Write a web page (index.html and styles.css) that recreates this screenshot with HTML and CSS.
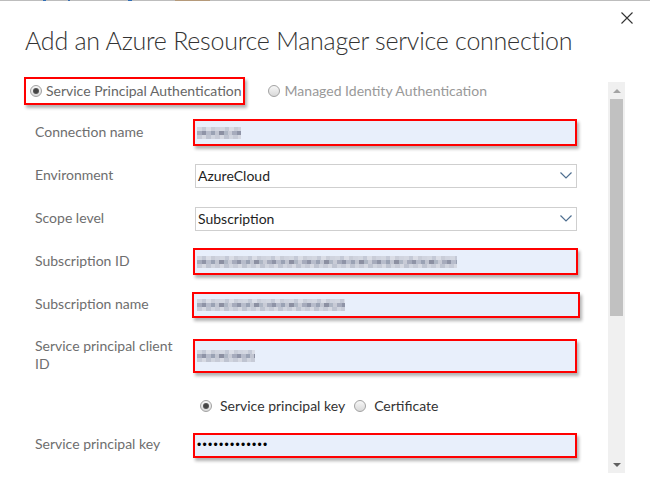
FILE: index.html
```html
<!DOCTYPE html>
<html lang="en">
<head>
<meta charset="utf-8">
<title>Add an Azure Resource Manager service connection</title>
<link rel="stylesheet" href="styles.css">
</head>
<body>
<div class="topline"></div>
<div class="dialog">
  <button class="close" aria-label="Close">
    <svg width="12" height="12" viewBox="0 0 12 12"><path d="M0.5 0.5 L11.5 11.5 M11.5 0.5 L0.5 11.5" stroke="#333" stroke-width="1.1" fill="none"/></svg>
  </button>
  <h1 class="title">Add an Azure Resource Manager service connection</h1>
  <div class="body">
    <div class="form">
      <div class="auth">
        <label class="radio auth-sel"><span class="dot checked"></span>Service Principal Authentication</label>
        <label class="radio auth-alt"><span class="dot"></span>Managed Identity Authentication</label>
      </div>
      <div class="grid">
        <span class="lbl">Connection name</span>
        <div class="field h27"><span class="blur" style="width:44px"></span></div>

        <span class="lbl">Environment</span>
        <div class="select"><span class="val">AzureCloud</span><svg class="chev" width="12" height="7" viewBox="0 0 12 7"><path d="M0.5 0.5 L6 6 L11.5 0.5" stroke="#4f6f90" stroke-width="1.2" fill="none"/></svg></div>

        <span class="lbl">Scope level</span>
        <div class="select"><span class="val">Subscription</span><svg class="chev" width="12" height="7" viewBox="0 0 12 7"><path d="M0.5 0.5 L6 6 L11.5 0.5" stroke="#4f6f90" stroke-width="1.2" fill="none"/></svg></div>

        <span class="lbl">Subscription ID</span>
        <div class="field h27 wide1"><span class="blur" style="width:260px"></span></div>

        <span class="lbl">Subscription name</span>
        <div class="field h26 wide2"><span class="blur" style="width:148px"></span></div>

        <span class="lbl">Service principal client ID</span>
        <div class="field h34"><span class="blur" style="width:58px"></span></div>

        <span class="lbl"></span>
        <div class="keytype">
          <label class="radio dark"><span class="dot checked"></span>Service principal key</label>
          <label class="radio dark cert"><span class="dot"></span>Certificate</label>
        </div>

        <span class="lbl">Service principal key</span>
        <div class="field h25"><span class="pw">•••••••••••••</span></div>
      </div>
    </div>
    <div class="scrollbar">
      <div class="sb-btn"><span class="tri-up"></span></div>
      <div class="thumb"></div>
      <div class="sb-space"></div>
      <div class="sb-btn"><span class="tri-down"></span></div>
    </div>
  </div>
</div>
</body>
</html>
```
FILE: styles.css
```css
* { box-sizing: border-box; }
html, body { margin: 0; padding: 0; background: #fff; }
body { font-family: "Lato", "Liberation Sans", sans-serif; font-size: 14px; color: #333; width: 650px; height: 487px; overflow: hidden; }

.topline {
  height: 1px;
  background: linear-gradient(90deg, #bdbdbd 0 43px, #2f6db5 43px 46px, #bdbdbd 46px 68px, #3a6fb0 68px 70px, #bdbdbd 70px 128px, #2f6db5 128px 132px, #bdbdbd 132px 175px, #b59a7a 175px 210px, #bdbdbd 210px);
}

.dialog { position: relative; padding-top: 24px; }

.close {
  position: absolute; left: 621px; top: 11px;
  width: 12px; height: 12px; padding: 0; border: 0; background: none;
  display: block; line-height: 0;
}

.title {
  margin: 0 0 0 25px;
  font-family: "Lato", sans-serif;
  font-weight: 300;
  font-size: 25px;
  letter-spacing: -0.25px;
  line-height: 30px;
  color: #333;
  white-space: nowrap;
}

.body { display: flex; }
.form { width: 608px; }

.auth {
  margin-top: 15px;
  height: 41px;
  display: flex;
  align-items: center;
  padding-left: 24px;
}

.radio { display: inline-flex; align-items: center; white-space: nowrap; line-height: 18px; }
.dot {
  width: 12px; height: 12px; border-radius: 50%;
  border: 1px solid #a2a2a2;
  background: linear-gradient(180deg, #f7f7f7, #d9d9d9);
  display: inline-flex; align-items: center; justify-content: center;
  flex: none;
}
.dot.checked::after {
  content: ""; width: 6px; height: 6px; border-radius: 50%;
  background: radial-gradient(circle, #444 0 35%, #6a6a6a 100%);
}

.auth-sel {
  height: 28px;
  border: 2px solid #f00;
  padding: 1px 1px 0 4px;
  gap: 4px;
  color: #666;
  box-shadow: 2px 3px 3px rgba(0,0,0,0.3);
}
.auth-alt { margin-left: 23px; gap: 5px; color: #999; padding-top: 1px; }

.grid {
  display: grid;
  grid-template-columns: 158px 385px;
  grid-template-rows: 43px 43px 43px 43px 43px 59px 41px 38px;
  align-items: center;
  padding-left: 35px;
}

.lbl { color: #6e6e6e; line-height: 18px; width: 140px; padding-bottom: 2px; }

.field {
  width: 384px;
  border: 2px solid #f00;
  background: #e8effb;
  display: flex;
  align-items: center;
  padding-left: 2px;
  box-shadow: 2px 3px 3px rgba(0,0,0,0.3);
}
.h25 { height: 25px; }
.h26 { height: 26px; }
.h27 { height: 27px; }
.h34 { height: 34px; }
.wide1 { width: 385px; }
.wide2 { width: 388px; margin-left: -1px; padding-left: 3px; }

.blur {
  display: block;
  height: 12px;
  background:
    repeating-linear-gradient(90deg, #d3d7e1 0 5px, #c4c9d6 5px 9px, #dadde6 9px 14px, #c9cdd8 14px 18px, #d0d4df 18px 23px) top / 100% 4px no-repeat,
    repeating-linear-gradient(90deg, #a6abbc 0 5px, #8f94a7 5px 9px, #b7bccb 9px 14px, #9aa2b4 14px 18px, #c1c5d1 18px 22px, #8c90a2 22px 27px, #aeb6c4 27px 31px, #c8cbd6 31px 35px) center / 100% 4px no-repeat,
    repeating-linear-gradient(90deg, #c7cbd7 0 5px, #d6d9e2 5px 9px, #bfc4d1 9px 14px, #d1d5df 14px 18px) bottom / 100% 4px no-repeat;
}

.pw { color: #000; font-family: "Liberation Sans", sans-serif; font-size: 12px; letter-spacing: 1.3px; line-height: 14px; }

.select {
  width: 382px; height: 24px; margin-left: 2px;
  border: 1px solid #cfcfcf; background: #fff;
  display: flex; align-items: center; justify-content: space-between;
  padding: 0 4px 0 2px;
}
.val { color: #1e1e1e; }
.chev { display: block; }

.keytype { display: flex; align-items: center; padding-left: 7px; }
.radio.dark { color: #333; gap: 8px; }
.cert { margin-left: 9px; }

.scrollbar {
  width: 17px; height: 391px; margin-top: 27px;
  background: #f0f0f0;
  display: flex; flex-direction: column;
}
.sb-btn { height: 17px; display: flex; align-items: center; justify-content: center; flex: none; }
.tri-up { width: 0; height: 0; border-left: 4px solid transparent; border-right: 4px solid transparent; border-bottom: 4px solid #a3a3a3; }
.tri-down { width: 0; height: 0; border-left: 4px solid transparent; border-right: 4px solid transparent; border-top: 4px solid #606060; }
.thumb { height: 217px; margin: 0 2px; background: #c1c1c1; flex: none; }
.sb-space { flex: 1; }
```
